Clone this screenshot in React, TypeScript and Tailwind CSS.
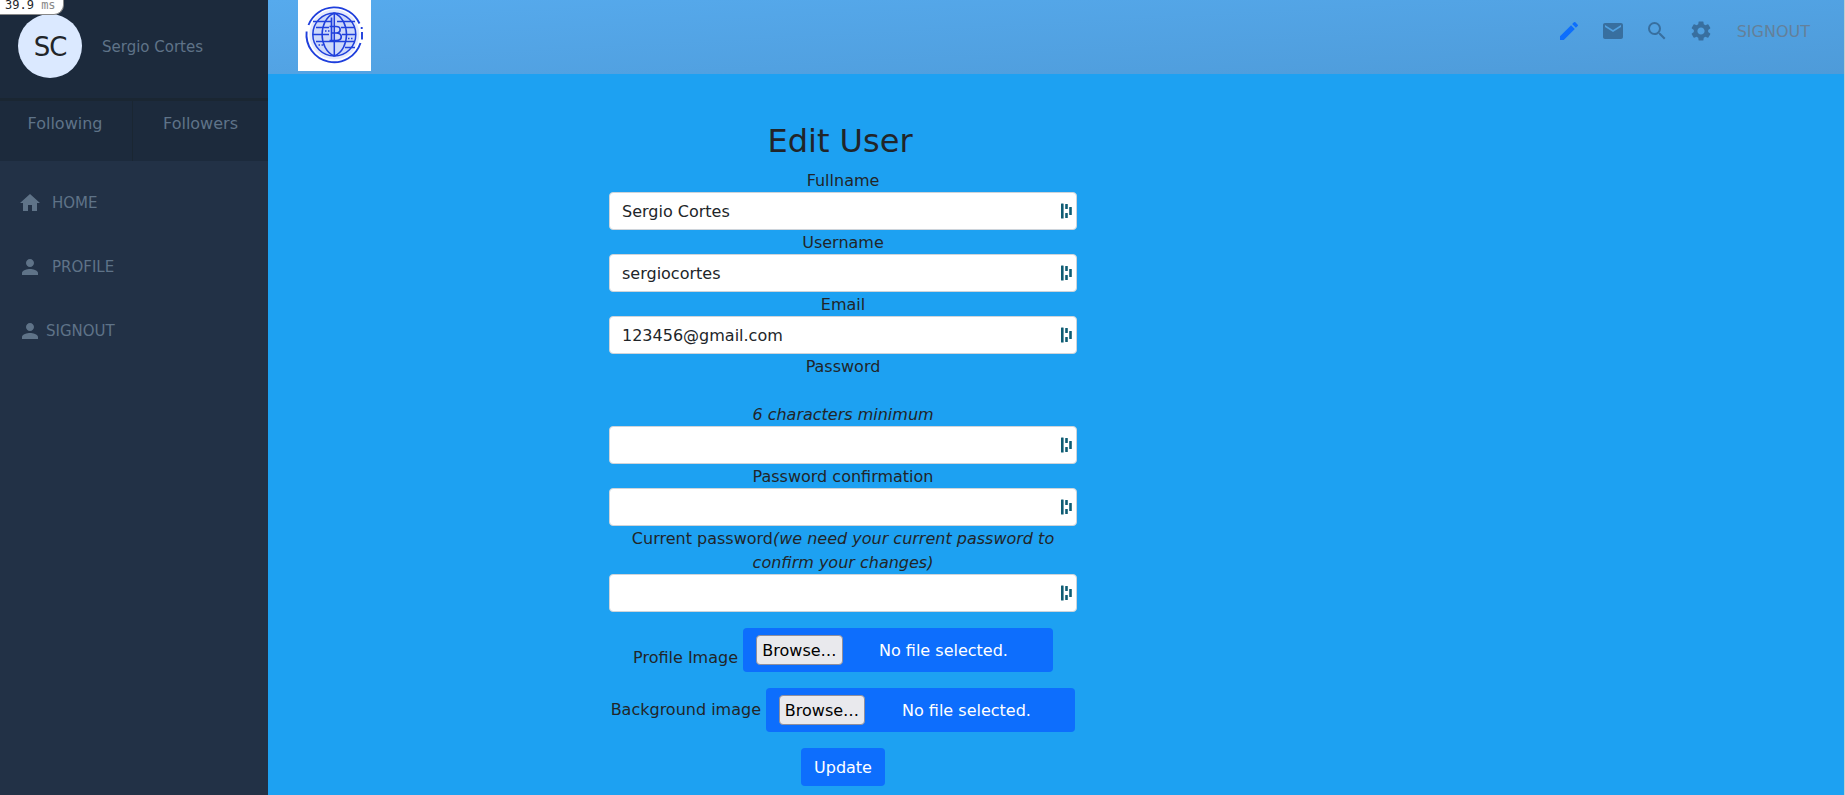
import type { ReactNode } from "react";
import { MdEdit, MdEmail, MdHome, MdPerson, MdSearch, MdSettings } from "react-icons/md";

function Logo() {
  return (
    <svg viewBox="0 0 73 71" className="h-[71px] w-[73px] bg-white" fill="none" stroke="#1f3fdc" strokeWidth="1.5">
      <circle cx="36.3" cy="34.5" r="25" fill="#e4e9fc" stroke="none" />
      <circle cx="36.3" cy="34.5" r="21.5" fill="#cdd8fa" />
      <path d="M10.5 25A27.7 27.7 0 0 1 61.5 23.5M63.7 27v2M64 32v7.5M62.5 43A27.7 27.7 0 0 1 8.6 31.5" strokeWidth="1.9" />
      <path d="M15 21.5H33M39 21.5H57M18 27.5H31M43 27.5H56M15 34.5H31M44 34.5H58M18 41.5H56M47 47.5H57" />
      <path d="M36.3 13V56M36.3 13C20 20 20 49 36.3 56M36.3 13C52.6 20 52.6 49 36.3 56" />
      <path d="M31.5 26.5h6.500c5.500 0 5.500 6.500 0 6.500h-4M38 33c7 0 7 7.500 0 7.500h-6.500M33.500 17.500v23" strokeWidth="1.7" />
      <path d="M27 31h1.500M30 31h1.500M50 38.500h1.500M53 38.500h1.500M20.500 45h1.500M23.500 45h1.500" strokeWidth="1.700" />
    </svg>
  );
}

function FillIcon() {
  return (
    <svg viewBox="0 0 12 16" className="h-4 w-3 shrink-0" fill="#0e5c73">
      <rect x="0" y="0.5" width="2.6" height="15" rx="0.5" />
      <rect x="4.2" y="1" width="2.6" height="5" rx="0.5" />
      <rect x="4.2" y="10" width="2.6" height="5" rx="0.5" />
      <rect x="8.2" y="4" width="2.6" height="8" rx="0.5" />
    </svg>
  );
}

function Label({ children }: { children: ReactNode }) {
  return <div className="-mb-px pt-px">{children}</div>;
}

function Field({ value = "" }: { value?: string }) {
  return (
    <div className="flex h-[38px] items-center rounded border border-[#ced4da] bg-white pr-[3px] pl-3">
      <span className="flex-1 pt-0.5 text-left">{value}</span>
      <FillIcon />
    </div>
  );
}

function FilePicker({ wide }: { wide?: boolean }) {
  return (
    <div className={`flex h-11 items-center rounded bg-[#0d6efd] pl-[13px] text-white ${wide ? "w-[310px]" : "w-[309px]"}`}>
      <button className={`h-[30px] rounded border border-[#8f8f9d] bg-[#e9e9ed] pt-0.5 text-black ${wide ? "w-[87px]" : "w-[86px]"}`}>Browse…</button>
      <span className={`pt-0.5 ${wide ? "ml-9" : "ml-[37px]"}`}>No file selected.</span>
    </div>
  );
}

function Sidebar() {
  return (
    <aside className="w-[268px] shrink-0 bg-[#223146] text-[#5f7388]">
      <div className="flex h-[101px] border-b-[3px] border-[#1a2632] bg-[#1c2a3c] pt-[14px] pl-[18px]">
        <div className="flex size-16 items-center justify-center rounded-full bg-[#dbe9ff] pt-0.5 text-[26px] tracking-[-1px] text-[#212529]">SC</div>
        <div className="ml-5 h-16 text-[15px] leading-[66px]">Sergio Cortes</div>
      </div>
      <div className="flex h-[60px] bg-[#1c2a3c] text-center leading-[45px]">
        <div className="w-[133px] border-r border-[#1a2632] pr-0.5">Following</div>
        <div className="flex-1">Followers</div>
      </div>
      <nav className="flex flex-col gap-10 pt-[30px] pl-[18px] text-[15px] leading-6">
        <a className="flex gap-[10px]"><MdHome size={24} />HOME</a>
        <a className="flex gap-[10px]"><MdPerson size={24} />PROFILE</a>
        <a className="flex gap-1"><MdPerson size={24} />SIGNOUT</a>
      </nav>
    </aside>
  );
}

export default function App() {
  return (
    <div className="relative flex h-[795px] w-[1845px] overflow-hidden border-r border-[#c9c9c9] bg-[#1da1f2] font-['DejaVu_Sans',sans-serif] text-base leading-6 text-[#212529]">
      <Sidebar />
      <div className="flex flex-1 flex-col">
        <header className="flex h-[74px] justify-between bg-linear-[177deg,#56aaed,#4e9bd9] pl-[30px]">
          <Logo />
          <div className="flex gap-5 pt-[19px] pr-[34px] text-[#386f9f]">
            <MdEdit size={24} className="text-[#0d6efd]" />
            <MdEmail size={24} />
            <MdSearch size={24} />
            <MdSettings size={24} />
            <span className="ml-1 pt-px text-[#64809a]">SIGNOUT</span>
          </div>
        </header>
        <main className="ml-[341px] w-[468px] pt-12 text-center">
          <h1 className="h-[46px] pr-1.5 text-[32px] leading-[39px]">Edit User</h1>
          <Label>Fullname</Label>
          <Field value="Sergio Cortes" />
          <Label>Username</Label>
          <Field value="sergiocortes" />
          <Label>Email</Label>
          <Field value="123456@gmail.com" />
          <Label>Password</Label>
          <div className="h-6" />
          <Label><em>6 characters minimum</em></Label>
          <Field />
          <Label>Password confirmation</Label>
          <Field />
          <Label>Current password<em>(we need your current password to confirm your changes)</em></Label>
          <Field />
          <div className="mt-4 flex h-11 justify-end pr-6">
            <span className="mt-[18px] mr-[5px]">Profile Image</span>
            <FilePicker wide />
          </div>
          <div className="mt-4 flex h-11 justify-end pr-0.5">
            <span className="mt-[10px] mr-[5px] whitespace-nowrap">Background image</span>
            <FilePicker />
          </div>
          <button className="mt-4 h-[38px] w-[84px] rounded bg-[#0d6efd] pt-0.5 text-white">Update</button>
        </main>
      </div>
      <div className="absolute top-0 left-0 h-[15px] w-16 rounded-br-[10px] border-r border-b border-[#888] bg-white pl-[5px] font-['DejaVu_Sans_Mono',monospace] text-xs leading-[10px] whitespace-pre">
        39.9 <span className="text-[#888]">ms</span>
      </div>
    </div>
  );
}
